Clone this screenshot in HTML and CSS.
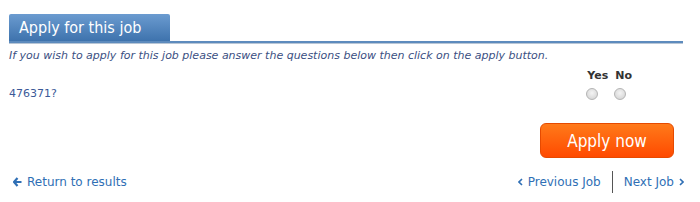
FILE: index.html
```html
<!DOCTYPE html>
<html lang="en">
<head>
    <meta charset="UTF-8">
    <title>Apply for this job</title>
    <link rel="stylesheet" href="styles.css">
</head>
<body>
    <div class="apply-box">
        <div class="tab-bar">
            <h2 class="tab">Apply for this job</h2>
        </div>
        <p class="intro">If you wish to apply for this job please answer the questions below then click on the apply button.</p>

        <div class="question-head">
            <span>Yes</span>
            <span>No</span>
        </div>
        <div class="question">
            <span class="question-text">476371?</span>
            <div class="answers">
                <span class="radio"></span>
                <span class="radio"></span>
            </div>
        </div>

        <div class="actions">
            <button class="apply-button">Apply now</button>
        </div>

        <div class="job-nav">
            <a href="#" class="nav-link">
                <svg class="icon" width="9" height="10" viewBox="0 0 9 10"><path d="M4.5 1 L1 5 L4.5 9 M1.5 5 H8.5" fill="none" stroke="#2f6fb5" stroke-width="2.2"/></svg>
                Return to results
            </a>
            <div class="pager">
                <a href="#" class="nav-link">
                    <svg class="icon" width="5" height="8" viewBox="0 0 5 8"><path d="M4 1 L1 4 L4 7" fill="none" stroke="#2f6fb5" stroke-width="1.6"/></svg>
                    Previous Job
                </a>
                <span class="divider"></span>
                <a href="#" class="nav-link">
                    Next Job
                    <svg class="icon" width="5" height="8" viewBox="0 0 5 8"><path d="M1 1 L4 4 L1 7" fill="none" stroke="#2f6fb5" stroke-width="1.6"/></svg>
                </a>
            </div>
        </div>
    </div>
</body>
</html>
```

FILE: styles.css
```css
* {
    margin: 0;
    padding: 0;
    box-sizing: border-box;
}

body {
    background-color: #ffffff;
    font-family: 'DejaVu Sans', Verdana, sans-serif;
    font-size: 11px;
    color: #334d80;
    padding: 14px 17px 0 9px;
}

.tab-bar {
    border-bottom: 2px solid #5d8bbd;
    box-shadow: 0 1px 0 #b8c6d6;
}

.tab {
    display: inline-block;
    width: 161px;
    height: 27px;
    padding: 4px 0 0 10px;
    font-family: 'DejaVu Sans Condensed', 'DejaVu Sans', sans-serif;
    font-size: 16px;
    font-weight: normal;
    color: #ffffff;
    background: linear-gradient(#6b9bd0, #3e73ad);
    border-radius: 2px 2px 0 0;
    vertical-align: bottom;
}

.intro {
    margin-top: 6px;
    font-style: italic;
    font-size: 11px;
    color: #3b4f82;
}

.question-head {
    display: flex;
    justify-content: flex-end;
    gap: 7px;
    margin-top: 7px;
    padding-right: 51px;
    font-weight: bold;
    font-size: 11px;
    color: #333333;
}

.question {
    display: flex;
    justify-content: space-between;
    align-items: center;
    margin-top: 5px;
}

.question-text {
    font-size: 11px;
    color: #3b5998;
}

.answers {
    display: flex;
    gap: 16px;
    padding-right: 57px;
}

.radio {
    width: 12px;
    height: 12px;
    border-radius: 50%;
    border: 1px solid #b4b4b4;
    background: radial-gradient(circle at 50% 40%, #f4f4f4, #cfcfcf);
}

.actions {
    display: flex;
    justify-content: flex-end;
    margin-top: 23px;
    padding-right: 9px;
}

.apply-button {
    width: 134px;
    height: 35px;
    font-family: 'DejaVu Sans Condensed', 'DejaVu Sans', sans-serif;
    font-size: 17px;
    color: #ffffff;
    border: 1px solid #e64a00;
    border-radius: 6px;
    background: linear-gradient(#ff7a1a, #ff4a00);
    cursor: pointer;
}

.job-nav {
    display: flex;
    justify-content: space-between;
    align-items: center;
    margin-top: 13px;
    padding-left: 4px;
}

.nav-link {
    display: flex;
    align-items: center;
    gap: 5px;
    color: #2f6fb5;
    text-decoration: none;
    font-size: 12px;
}

.pager {
    display: flex;
    align-items: center;
    gap: 11px;
    margin-right: -1px;
}

.divider {
    width: 1px;
    height: 22px;
    background-color: #555555;
}
```
